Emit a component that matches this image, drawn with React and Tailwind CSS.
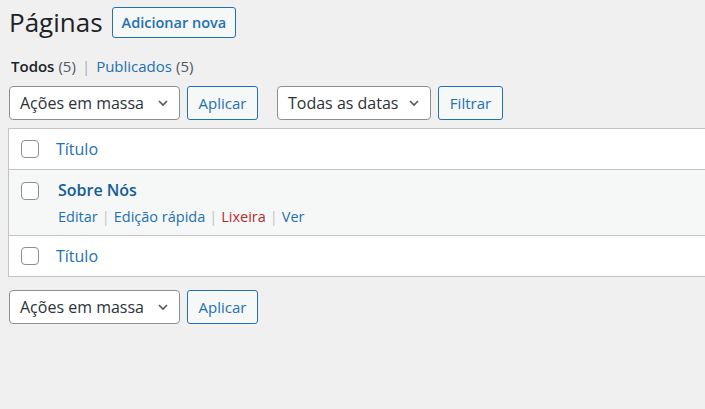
import React from "react";

const Chevron = () => (
  <svg width="16" height="16" viewBox="0 0 20 20" className="absolute right-[8px] top-1/2 -translate-y-1/2">
    <path d="M5 7.5l5 5 5-5" fill="none" stroke="#50575e" strokeWidth="2" />
  </svg>
);

const Select = ({ label, w }) => (
  <div className={`relative h-[34px] ${w} rounded-[4px] border border-[#8c8f94] bg-white pl-[10px] flex items-center text-[16px] text-[#2c3338]`}>
    {label}
    <Chevron />
  </div>
);

const Btn = ({ label, w }) => (
  <div className={`h-[34px] ${w} rounded-[3px] border border-[#2271b1] bg-[#f6f7f7] flex items-center justify-center text-[15px] text-[#2271b1]`}>
    {label}
  </div>
);

const Check = () => (
  <div className="w-[18px] h-[18px] rounded-[4px] border border-[#8c8f94] bg-white" />
);

export default function App() {
  return (
    <div className="min-h-[409px] w-[705px] bg-[#f0f0f1] overflow-hidden" style={{ fontFamily: '"Open Sans", sans-serif' }}>
      <div className="flex items-center pt-[7px] pl-[9px]">
        <h1 className="text-[26px] leading-[31px] text-[#1d2327] font-normal">Páginas</h1>
        <div className="ml-[9px] h-[31px] px-[9px] rounded-[3px] border border-[#2271b1] bg-[#f6f7f7] flex items-center text-[14.5px] text-[#2271b1] font-semibold">
          Adicionar nova
        </div>
      </div>
      <div className="mt-[18px] pl-[11px] text-[15px] leading-[20px] flex items-center">
        <span className="font-semibold text-[#1d2327]">Todos</span>
        <span className="ml-[4px] text-[#50575e]">(5)</span>
        <span className="mx-[6px] text-[#a7aaad]">|</span>
        <span className="text-[#2271b1]">Publicados</span>
        <span className="ml-[4px] text-[#50575e]">(5)</span>
      </div>
      <div className="mt-[10px] pl-[9px] flex items-center">
        <Select label="Ações em massa" w="w-[171px]" />
        <div className="ml-[7px]"><Btn label="Aplicar" w="w-[71px]" /></div>
        <div className="ml-[19px]"><Select label="Todas as datas" w="w-[154px]" /></div>
        <div className="ml-[7px]"><Btn label="Filtrar" w="w-[65px]" /></div>
      </div>
      <div className="mt-[8px] ml-[8px] w-[720px] border border-[#c3c4c7] bg-white">
        <div className="h-[41px] flex items-center border-b border-[#c3c4c7]">
          <div className="ml-[12px]"><Check /></div>
          <span className="ml-[17px] text-[16px] text-[#2271b1]">Título</span>
        </div>
        <div className="h-[66px] bg-[#f6f7f7] border-b border-[#c3c4c7] flex items-start">
          <div className="ml-[12px] mt-[12px]"><Check /></div>
          <div className="ml-[19px] mt-[8px]">
            <div className="text-[16px] leading-[24px] font-semibold text-[#135e96]">Sobre Nós</div>
            <div className="mt-[5px] text-[14.5px] leading-[20px] flex items-center">
              <span className="text-[#2271b1]">Editar</span>
              <span className="mx-[4px] text-[#c3c4c7]">|</span>
              <span className="text-[#2271b1]">Edição rápida</span>
              <span className="mx-[4px] text-[#c3c4c7]">|</span>
              <span className="text-[#b32d2e]">Lixeira</span>
              <span className="mx-[4px] text-[#c3c4c7]">|</span>
              <span className="text-[#2271b1]">Ver</span>
            </div>
          </div>
        </div>
        <div className="h-[40px] flex items-center">
          <div className="ml-[12px]"><Check /></div>
          <span className="ml-[17px] text-[16px] text-[#2271b1]">Título</span>
        </div>
      </div>
      <div className="mt-[13px] pl-[9px] flex items-center">
        <Select label="Ações em massa" w="w-[171px]" />
        <div className="ml-[7px]"><Btn label="Aplicar" w="w-[71px]" /></div>
      </div>
    </div>
  );
}
